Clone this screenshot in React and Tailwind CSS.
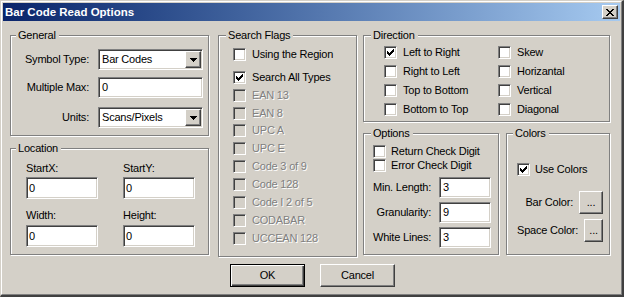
import React from "react";

const sunken =
  "border border-t-[#808080] border-l-[#808080] border-b-white border-r-white shadow-[inset_1px_1px_0_#404040,inset_-1px_-1px_0_#d4d0c8]";
const raised =
  "border border-t-white border-l-white border-b-[#404040] border-r-[#404040] shadow-[inset_-1px_-1px_0_#808080]";

function CheckMark() {
  return (
    <svg width="7" height="7" viewBox="0 0 7 7" shapeRendering="crispEdges">
      <path
        fill="#000"
        d="M6 0h1v1h-1z M5 1h2v1h-2z M0 2h1v1h-1z M4 2h3v1h-3z M0 3h2v1h-2z M3 3h3v1h-3z M0 4h5v1h-5z M1 5h3v1h-3z M2 6h1v1h-1z"
      />
    </svg>
  );
}

function Arrow() {
  return (
    <svg width="7" height="4" viewBox="0 0 7 4" shapeRendering="crispEdges">
      <path fill="#000" d="M0 0h7v1h-7z M1 1h5v1h-5z M2 2h3v1h-3z M3 3h1v1h-1z" />
    </svg>
  );
}

function CloseX() {
  return (
    <svg width="8" height="7" viewBox="0 0 8 7" shapeRendering="crispEdges">
      <path
        fill="#000"
        d="M0 0h2v1h-2z M6 0h2v1h-2z M1 1h2v1h-2z M5 1h2v1h-2z M2 2h4v1h-4z M3 3h2v1h-2z M2 4h4v1h-4z M1 5h2v1h-2z M5 5h2v1h-2z M0 6h2v1h-2z M6 6h2v1h-2z"
      />
    </svg>
  );
}

function Check({ label, checked = false, disabled = false, gap = "ml-[6px]" }) {
  return (
    <div className="flex items-center h-[13px]">
      <div
        className={`w-[13px] h-[13px] shrink-0 flex items-center justify-center ${sunken} ${
          disabled ? "bg-[#d4d0c8]" : "bg-white"
        }`}
      >
        {checked && <CheckMark />}
      </div>
      <span
        className={`${gap} whitespace-nowrap ${
          disabled ? "text-[#808080] [text-shadow:1px_1px_0_#fff]" : "text-black"
        }`}
      >
        {label}
      </span>
    </div>
  );
}

function Field({ value, className = "", pad = "pl-[3px]" }) {
  return (
    <div className={`bg-white flex items-center ${pad} ${sunken} ${className}`}>
      {value}
    </div>
  );
}

function Combo({ value }) {
  return (
    <div className={`bg-white w-[105px] h-[21px] p-[1px] flex ${sunken}`}>
      <div className="flex-1 flex items-center pl-[2px]">{value}</div>
      <div className={`w-[16px] h-full bg-[#d4d0c8] flex items-center justify-center ${raised}`}>
        <Arrow />
      </div>
    </div>
  );
}

function Group({ title, className = "", titleLeft = "left-[7px]", children }) {
  return (
    <div
      className={`relative border border-[#808080] shadow-[inset_1px_1px_0_#fff,1px_1px_0_#fff] ${className}`}
    >
      <span
        className={`absolute -top-[7px] ${titleLeft} bg-[#d4d0c8] pl-[2px] pr-[3px] whitespace-nowrap`}
      >
        {title}
      </span>
      {children}
    </div>
  );
}

function Button({ children, isDefault = false, className = "" }) {
  if (isDefault) {
    return (
      <div
        className={`border border-black shadow-[inset_1px_1px_0_#fff,inset_-1px_-1px_0_#404040,inset_-2px_-2px_0_#808080] flex items-center justify-center ${className}`}
      >
        {children}
      </div>
    );
  }
  return (
    <div className={`flex items-center justify-center ${raised} ${className}`}>{children}</div>
  );
}

export default function App() {
  return (
    <div className="w-[624px] h-[297px] bg-[#d4d0c8] border-l border-t border-l-[#d4d0c8] border-t-[#d4d0c8] border-r-2 border-b-2 border-r-[#404040] border-b-[#404040] font-['Liberation_Sans',Arial,sans-serif] text-[11px] leading-[13px] tracking-[-0.2px] text-black">
      <div className="h-full border border-t-white border-l-white border-r-[#808080] border-b-[#808080] p-[1px] flex flex-col">
        {/* Title bar */}
        <div className="h-[18px] shrink-0 flex items-center justify-between pl-[2px] pr-[2px] bg-gradient-to-r from-[#0a246a] to-[#a6caf0]">
          <span className="text-white font-bold text-[11.5px] tracking-normal">
            Bar Code Read Options
          </span>
          <div className={`w-[16px] h-[14px] bg-[#d4d0c8] flex items-center justify-center ${raised}`}>
            <CloseX />
          </div>
        </div>

        {/* Body */}
        <div className="flex pl-[7px] pt-[14px]">
          {/* Left column */}
          <div className="flex flex-col w-[199px]">
            <Group title="General" titleLeft="left-[5px]" className="h-[101px] pt-[13px]">
              <div className="flex items-center">
                <span className="w-[78px] text-right whitespace-nowrap">Symbol Type:</span>
                <div className="ml-[9px]">
                  <Combo value="Bar Codes" />
                </div>
              </div>
              <div className="flex items-center mt-[7px]">
                <span className="w-[78px] text-right whitespace-nowrap">Multiple Max:</span>
                <Field value="0" className="ml-[9px] w-[105px] h-[21px]" />
              </div>
              <div className="flex items-center mt-[9px]">
                <span className="w-[78px] text-right whitespace-nowrap">Units:</span>
                <div className="ml-[9px]">
                  <Combo value="Scans/Pixels" />
                </div>
              </div>
            </Group>

            <Group title="Location" titleLeft="left-[5px]" className="mt-[12px] h-[107px] pt-[13px] pl-[15px]">
              <div className="flex">
                <div className="w-[97px] flex flex-col">
                  <span>StartX:</span>
                  <Field value="0" pad="pl-[2px]" className="mt-[2px] w-[72px] h-[22px]" />
                </div>
                <div className="flex flex-col">
                  <span>StartY:</span>
                  <Field value="0" pad="pl-[2px]" className="mt-[2px] w-[72px] h-[22px]" />
                </div>
              </div>
              <div className="flex mt-[10px]">
                <div className="w-[97px] flex flex-col">
                  <span>Width:</span>
                  <Field value="0" pad="pl-[2px]" className="mt-[3px] w-[72px] h-[22px]" />
                </div>
                <div className="flex flex-col">
                  <span>Height:</span>
                  <Field value="0" pad="pl-[2px]" className="mt-[3px] w-[72px] h-[22px]" />
                </div>
              </div>
            </Group>
          </div>

          {/* Search Flags */}
          <Group title="Search Flags" className="ml-[9px] w-[139px] h-[222px] pt-[12px] pl-[14px]">
            <Check label="Using the Region" />
            <div className="mt-[10px]">
              <Check label="Search All Types" checked />
            </div>
            <div className="mt-[5px]">
              <Check label="EAN 13" disabled />
            </div>
            <div className="mt-[5px]">
              <Check label="EAN 8" disabled />
            </div>
            <div className="mt-[4px]">
              <Check label="UPC A" disabled />
            </div>
            <div className="mt-[5px]">
              <Check label="UPC E" disabled />
            </div>
            <div className="mt-[5px]">
              <Check label="Code 3 of 9" disabled />
            </div>
            <div className="mt-[5px]">
              <Check label="Code 128" disabled />
            </div>
            <div className="mt-[5px]">
              <Check label="Code I 2 of 5" disabled />
            </div>
            <div className="mt-[5px]">
              <Check label="CODABAR" disabled />
            </div>
            <div className="mt-[5px]">
              <Check label="UCCEAN 128" disabled />
            </div>
          </Group>

          {/* Right column */}
          <div className="ml-[6px] flex flex-col w-[247px]">
            <Group title="Direction" className="h-[87px] pt-[10px] pl-[20px]">
              <div className="grid grid-cols-[114px_1fr] gap-y-[6px]">
                <Check label="Left to Right" checked />
                <Check label="Skew" />
                <Check label="Right to Left" />
                <Check label="Horizantal" />
                <Check label="Top to Bottom" />
                <Check label="Vertical" />
                <Check label="Bottom to Top" />
                <Check label="Diagonal" />
              </div>
            </Group>

            <div className="mt-[11px] flex gap-[7px]">
              <Group title="Options" className="w-[136px] h-[122px] pt-[11px] pl-[9px]">
                <Check label="Return Check Digit" gap="ml-[5px]" />
                <div className="mt-[1px]">
                  <Check label="Error Check Digit" gap="ml-[5px]" />
                </div>
                <div className="flex items-center mt-[5px]">
                  <span className="w-[58px] text-right whitespace-nowrap">Min. Length:</span>
                  <Field value="3" className="ml-[8px] w-[52px] h-[21px]" />
                </div>
                <div className="flex items-center mt-[4px]">
                  <span className="w-[58px] text-right whitespace-nowrap">Granularity:</span>
                  <Field value="9" className="ml-[8px] w-[52px] h-[21px]" />
                </div>
                <div className="flex items-center mt-[4px]">
                  <span className="w-[58px] text-right whitespace-nowrap">White Lines:</span>
                  <Field value="3" className="ml-[8px] w-[52px] h-[21px]" />
                </div>
              </Group>

              <Group title="Colors" titleLeft="left-[6px]" className="w-[104px] h-[122px] pt-[29px] pl-[10px] pr-[6px]">
                <Check label="Use Colors" checked gap="ml-[5px]" />
                <div className="mt-[15px] flex items-center justify-end gap-[6px]">
                  <span className="whitespace-nowrap">Bar Color:</span>
                  <Button className="w-[24px] h-[23px]">...</Button>
                </div>
                <div className="mt-[5px] flex items-center justify-end gap-[6px]">
                  <span className="whitespace-nowrap">Space Color:</span>
                  <Button className="w-[24px] h-[23px]">...</Button>
                </div>
              </Group>
            </div>
          </div>
        </div>

        {/* Buttons */}
        <div className="flex pl-[227px] mt-[7px]">
          <Button isDefault className="w-[75px] h-[23px]">
            OK
          </Button>
          <Button className="ml-[15px] w-[75px] h-[23px]">Cancel</Button>
        </div>
      </div>
    </div>
  );
}
